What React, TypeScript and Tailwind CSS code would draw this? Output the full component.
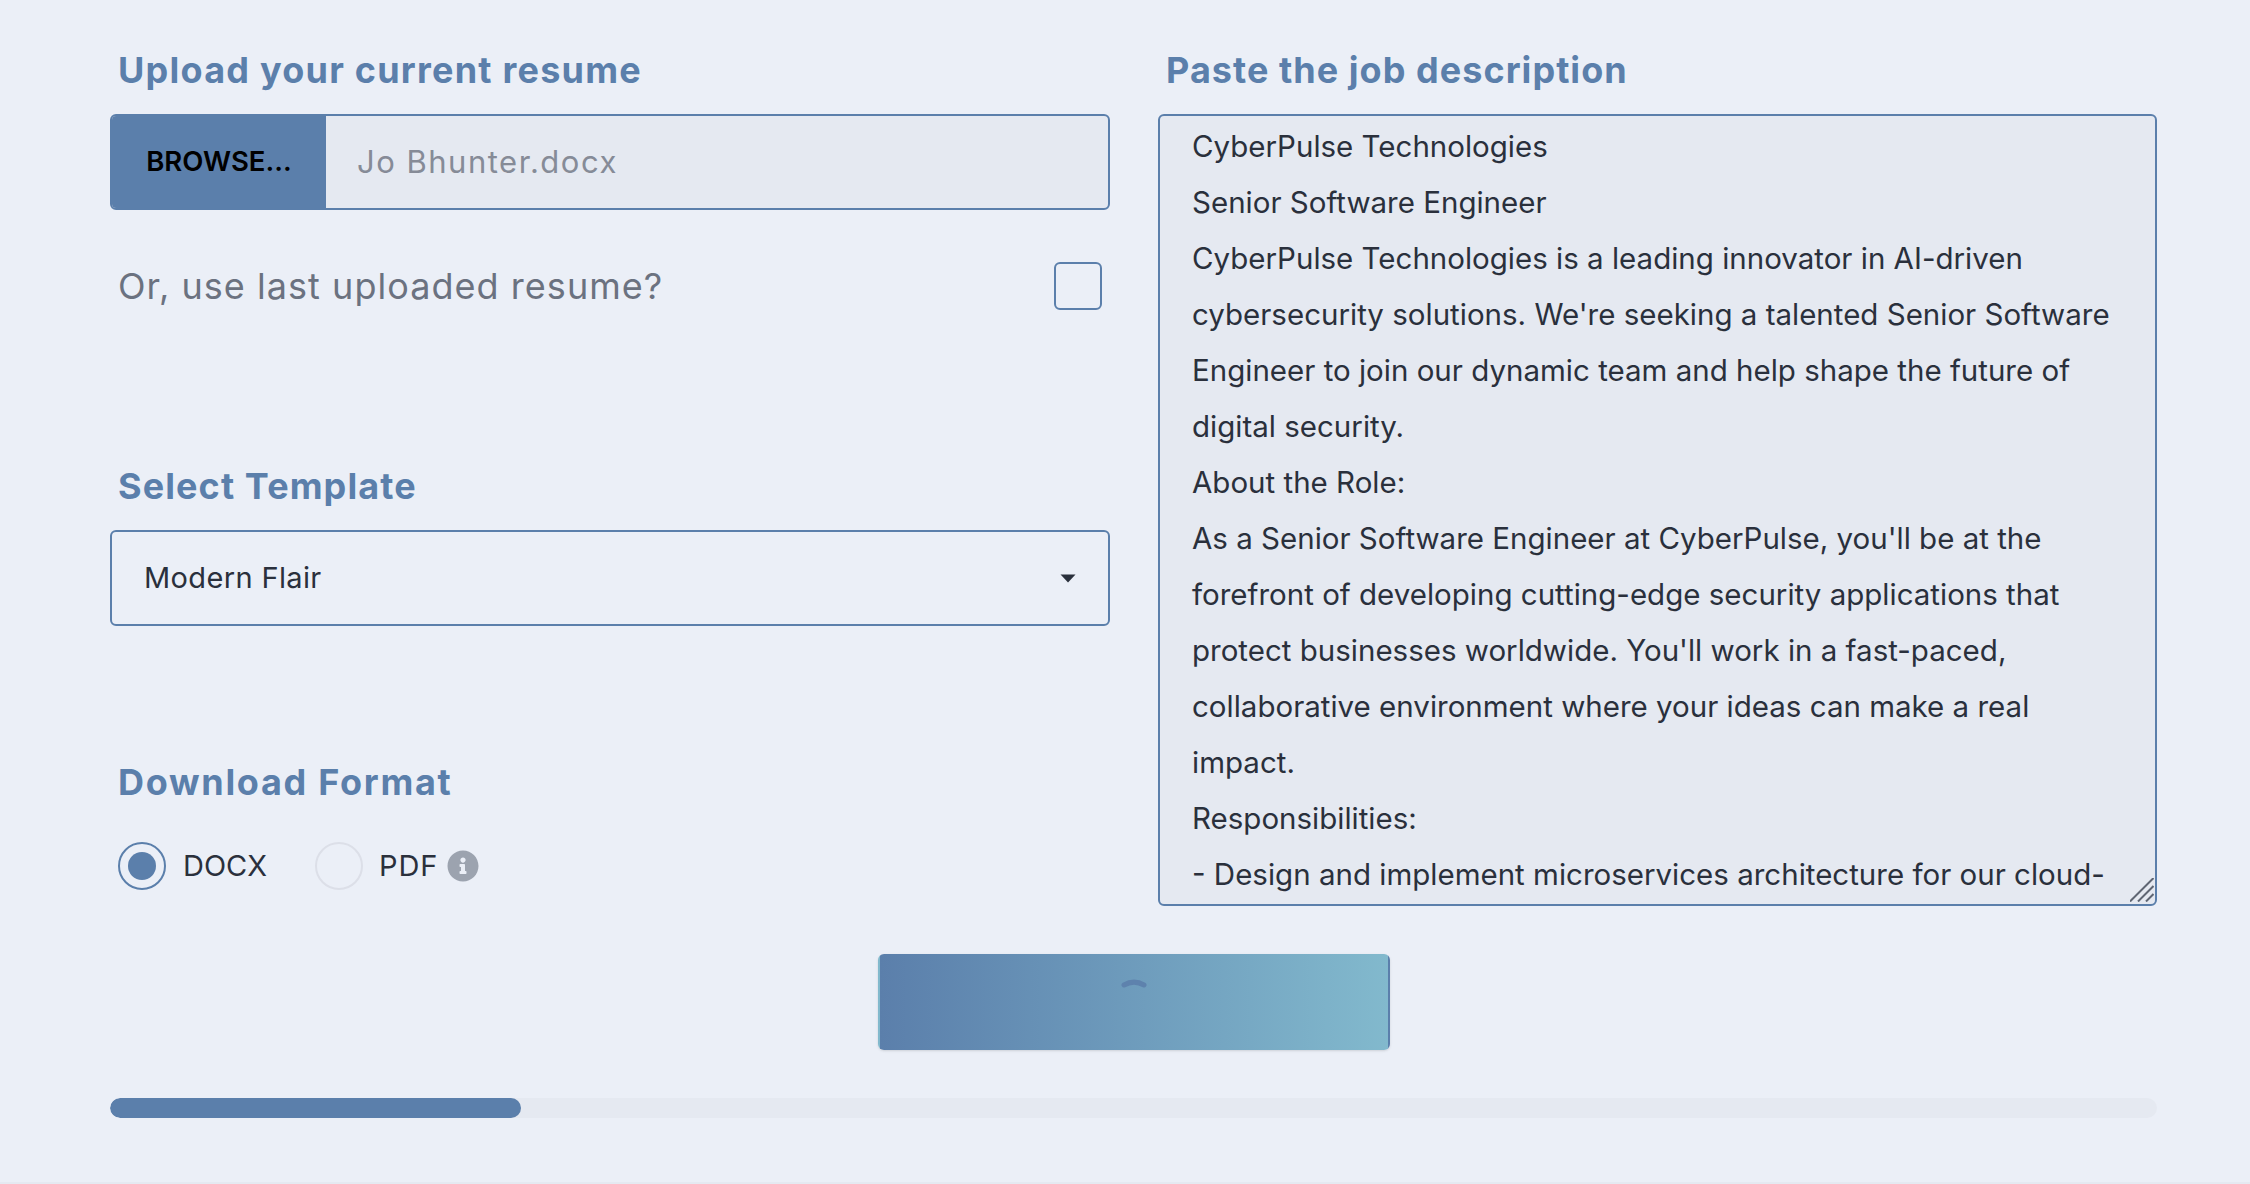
import React from 'react';
import { FaInfoCircle } from 'react-icons/fa';

const jobDescription = [
  'CyberPulse Technologies',
  'Senior Software Engineer',
  'CyberPulse Technologies is a leading innovator in AI-driven',
  "cybersecurity solutions. We're seeking a talented Senior Software",
  'Engineer to join our dynamic team and help shape the future of',
  'digital security.',
  'About the Role:',
  "As a Senior Software Engineer at CyberPulse, you'll be at the",
  'forefront of developing cutting-edge security applications that',
  "protect businesses worldwide. You'll work in a fast-paced,",
  'collaborative environment where your ideas can make a real',
  'impact.',
  'Responsibilities:',
  '- Design and implement microservices architecture for our cloud-',
].join('\n');

function Heading({ children, className }: { children: React.ReactNode; className: string }) {
  return <h2 className={`h-10 pl-2 text-[36px] leading-10 font-bold text-[#5b7fab] ${className}`}>{children}</h2>;
}

export default function App() {
  return (
    <div className="h-[1184px] overflow-hidden border-b-2 border-[#e5e9f1] bg-[#ebeff7] pt-[50px] pr-[93px] pl-[110px] font-['Inter',sans-serif]">
      <div className="grid grid-cols-[1000px_999px] gap-x-[48px]">
        {/* Left column */}
        <div className="flex flex-col">
          <Heading className="tracking-[1.23px]">Upload your current resume</Heading>
          <div className="mt-6 flex h-24 overflow-hidden rounded-md border-2 border-[#5b7fab] bg-[#e5e9f1]">
            <button className="w-[214px] shrink-0 bg-[#5b7fab] text-[27.5px] font-semibold text-black">BROWSE...</button>
            <span className="flex items-center pl-[31px] text-[31px] tracking-[1.5px] text-[#868b97]">Jo Bhunter.docx</span>
          </div>

          <div className="mt-[52px] flex h-12 items-center justify-between pr-2 pl-2">
            <span className="text-[36px] tracking-[1.04px] text-[#6b7280]">Or, use last uploaded resume?</span>
            <span className="h-12 w-12 rounded-md border-2 border-[#5b7fab]" />
          </div>

          <div className="mt-[156px]">
            <Heading className="tracking-[1.1px]">Select Template</Heading>
          </div>
          <div className="mt-6 flex h-24 items-center justify-between rounded-md border-2 border-[#5b7fab] pr-[32px] pl-[32px] text-[29px] tracking-[0.36px] text-[#2a303c]">
            <span>Modern Flair</span>
            <svg width="16" height="9" viewBox="0 0 16 9"><path d="M0.5 0.5h15L8 8.5z" fill="#2a303c" /></svg>
          </div>

          <div className="mt-[136px]">
            <Heading className="tracking-[1.7px]">Download Format</Heading>
          </div>
          <div className="mt-10 flex h-12 items-center pl-2 text-[29px] text-[#2a303c]">
            <span className="flex h-12 w-12 items-center justify-center rounded-full border-2 border-[#5b7fab]">
              <span className="h-7 w-7 rounded-full bg-[#5b7fab]" />
            </span>
            <span className="ml-[17px]">DOCX</span>
            <span className="ml-[48px] h-12 w-12 rounded-full border-2 border-[#dcdfe8]" />
            <span className="ml-[16px] tracking-[1px]">PDF</span>
            <FaInfoCircle className="ml-[8px] text-[#9ca3af]" size={32} />
          </div>
        </div>

        {/* Right column */}
        <div className="flex flex-col">
          <Heading className="tracking-[1.04px]">Paste the job description</Heading>
          <div className="relative mt-6">
            <textarea
              readOnly
              wrap="off"
              defaultValue={jobDescription}
              className="block h-[792px] w-full resize-none overflow-hidden rounded-md border-2 border-[#5b7fab] bg-[#e5e9f1] pt-[2px] pl-[32px] text-[29.5px] leading-[56px] text-[#2a303c] outline-none"
            />
            {/* resize grip */}
            <svg className="absolute right-[3px] bottom-[4px]" width="24" height="24" viewBox="0 0 24 24" fill="none" stroke="#5f6673" strokeWidth="2">
              <path d="M0 23.5L23.5 0M8 23.5L23.5 8M16 23.5L23.5 16" />
            </svg>
          </div>
        </div>
      </div>

      <div className="mt-12 flex justify-center">
        <button className="flex h-24 w-[512px] items-center justify-center rounded-md border-2 border-transparent bg-gradient-to-r from-[#5b7fab] to-[#82b9cd] shadow-sm">
          <svg width="48" height="48" viewBox="0 0 48 48" fill="none">
            <path d="M14 7A20 20 0 0 1 34 7" stroke="#5e82ad" strokeWidth="5" strokeLinecap="round" />
          </svg>
        </button>
      </div>

      <div className="mt-12 h-5 overflow-hidden rounded-full bg-[#e5e9f1]">
        <div className="h-full w-[20.1%] rounded-full bg-[#5b7fab]" />
      </div>
    </div>
  );
}
